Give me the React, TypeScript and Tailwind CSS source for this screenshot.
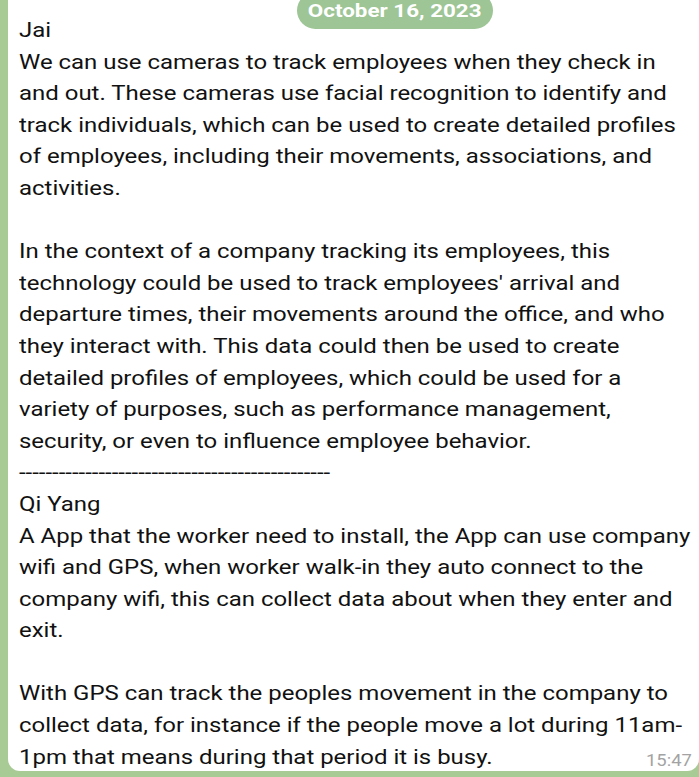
const lines: string[] = [
  'Jai',
  'We can use cameras to track employees when they check in',
  'and out. These cameras use facial recognition to identify and',
  'track individuals, which can be used to create detailed profiles',
  'of employees, including their movements, associations, and',
  'activities.',
  '',
  'In the context of a company tracking its employees, this',
  "technology could be used to track employees' arrival and",
  'departure times, their movements around the office, and who',
  'they interact with. This data could then be used to create',
  'detailed profiles of employees, which could be used for a',
  'variety of purposes, such as performance management,',
  'security, or even to influence employee behavior.',
  '-----------------------------------------------',
  'Qi Yang',
  'A App that the worker need to install, the App can use company',
  'wifi and GPS, when worker walk-in they auto connect to the',
  'company wifi, this can collect data about when they enter and',
  'exit.',
  '',
  'With GPS can track the peoples movement in the company to',
  'collect data, for instance if the people move a lot during 11am-',
  '1pm that means during that period it is busy.',
];

export default function App() {
  return (
    <div className="relative w-[699px] h-[777px] overflow-hidden bg-[#a8cb96]">
      {/* chat bubble */}
      <div className="ml-2 h-[771px] bg-white rounded-b-[12px] pl-[11px] pt-[15px] font-['Roboto',sans-serif] text-[20px] leading-[31.6px] text-[#111]">
        <div className="origin-left scale-x-[1.198]">
          {lines.map((l, i) => (
            <div key={i} className="whitespace-pre h-[31.6px]">
              {l}
            </div>
          ))}
        </div>
      </div>

      {/* time */}
      <div className="absolute right-[7px] bottom-[4px] origin-right scale-x-[1.15] font-['Roboto',sans-serif] text-[16px] text-[#a3a3a3]">
        15:47
      </div>

      {/* sticky date */}
      <div className="absolute left-[297px] top-[-8px] h-[37px] w-[196px] rounded-full bg-[#9dc595] flex items-end justify-center pb-[9px] font-['Roboto',sans-serif] font-bold text-[19px] text-white leading-none">
        <span className="scale-x-[1.18]">October 16, 2023</span>
      </div>
    </div>
  );
}
